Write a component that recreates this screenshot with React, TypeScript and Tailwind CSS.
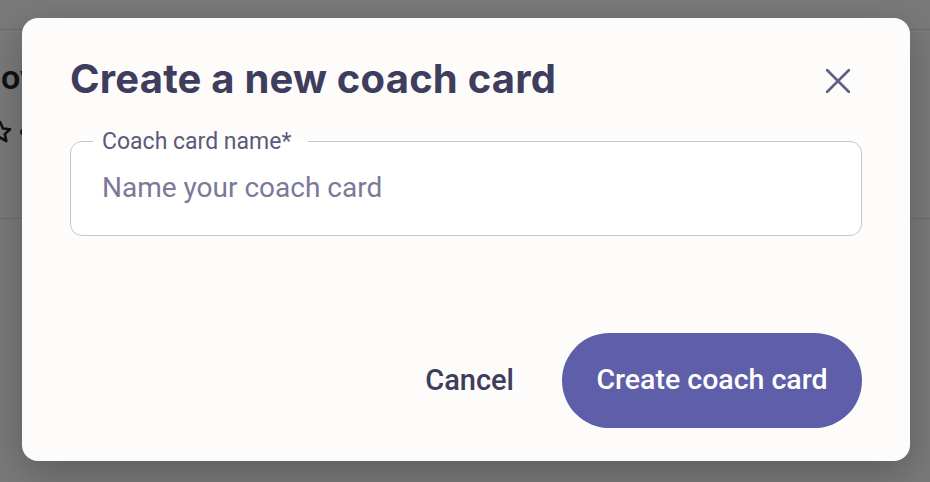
import React from "react";

function CloseIcon() {
  return (
    <svg width="24" height="24" viewBox="0 0 24 24" fill="none">
      <path d="M1 1L23 23M23 1L1 23" stroke="#5f5e84" strokeWidth="2.6" strokeLinecap="round" />
    </svg>
  );
}

function StarIcon() {
  return (
    <svg width="24" height="24" viewBox="0 0 24 24" fill="none" stroke="#222" strokeWidth="2.6" strokeLinejoin="round">
      <path d="M12 2l3 6.5 7 .8-5.2 4.8 1.5 7-6.3-3.6-6.3 3.6 1.5-7L2 9.3l7-.8z" />
    </svg>
  );
}

export default function App() {
  return (
    <div className="relative w-[930px] h-[482px] overflow-hidden bg-[#f4f4f4] font-['Roboto',sans-serif]">
      {/* page behind the dialog */}
      <div className="pt-[29px]">
        <div className="h-[190px] border-y border-[#d8d8d8] flex flex-col">
          <div className="pt-[30px] pl-[1px] text-[34px] font-semibold text-[#222] leading-none">ove</div>
          <div className="pt-[26px] flex items-center gap-[8px] -ml-[12px]">
            <StarIcon />
            <div className="w-[6px] h-[6px] rounded-full bg-[#333]" />
          </div>
        </div>
      </div>

      {/* overlay */}
      <div className="absolute inset-0 bg-black/50 flex items-center justify-center pl-[2px] pb-[3px]">
        <div className="w-[888px] h-[443px] bg-[#fdfcfb] rounded-[16px] shadow-[0_12px_40px_rgba(0,0,0,0.25)] px-[48px] pt-[37px] pb-[33px] flex flex-col">
          <div className="flex items-center justify-between">
            <h2 className="font-['Inter',sans-serif] font-bold text-[40px] leading-[48px] tracking-[0.2px] text-[#3f3d5e]">
              Create a new coach card
            </h2>
            <button className="mr-[12px] mt-[4px]">
              <CloseIcon />
            </button>
          </div>

          <fieldset className="mt-[27px] border border-[#c6c6c6] rounded-[12px] bg-white pl-[22px] pr-[20px] h-[106px]">
            <legend className="pl-[9px] pr-[17px] text-[23px] leading-[23px] text-[#5c5a7a]">
              Coach card name*
            </legend>
            <input
              className="w-full mt-[14px] outline-none bg-transparent text-[28px] leading-[42px] pl-[9px] text-[#3f3d5e] placeholder:text-[#7b7998]"
              placeholder="Name your coach card"
            />
          </fieldset>

          <div className="mt-auto flex items-center justify-end gap-[48px]">
            <button className="text-[29px] font-medium text-[#3f3d5c]">Cancel</button>
            <button className="h-[95px] w-[300px] rounded-full bg-[#5f5ea9] text-white text-[28.5px] font-medium">
              Create coach card
            </button>
          </div>
        </div>
      </div>
    </div>
  );
}
